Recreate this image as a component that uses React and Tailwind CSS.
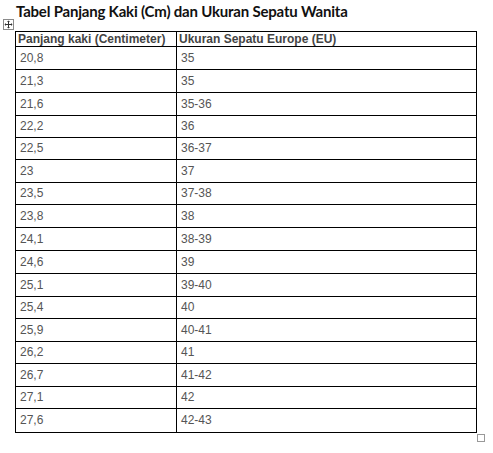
import React from "react";

const rows = [
  { kaki: "20,8", eu: "35", h: "h-[23px]" },
  { kaki: "21,3", eu: "35", h: "h-[23px]" },
  { kaki: "21,6", eu: "35-36", h: "h-[23px]" },
  { kaki: "22,2", eu: "36", h: "h-[22px]" },
  { kaki: "22,5", eu: "36-37", h: "h-[22px]" },
  { kaki: "23", eu: "37", h: "h-[23px]" },
  { kaki: "23,5", eu: "37-38", h: "h-[22px]" },
  { kaki: "23,8", eu: "38", h: "h-[23px]" },
  { kaki: "24,1", eu: "38-39", h: "h-[23px]" },
  { kaki: "24,6", eu: "39", h: "h-[23px]" },
  { kaki: "25,1", eu: "39-40", h: "h-[23px]" },
  { kaki: "25,4", eu: "40", h: "h-[22px]" },
  { kaki: "25,9", eu: "40-41", h: "h-[23px]" },
  { kaki: "26,2", eu: "41", h: "h-[22px]" },
  { kaki: "26,7", eu: "41-42", h: "h-[23px]" },
  { kaki: "27,1", eu: "42", h: "h-[22px]" },
  { kaki: "27,6", eu: "42-43", h: "h-[23px]" },
];

const MoveHandle = () => (
  <svg width="11" height="11" viewBox="0 0 11 11" className="block">
    <rect x="0.5" y="0.5" width="10" height="10" fill="white" stroke="#8a8a8a" />
    <g stroke="#333" strokeWidth="1" fill="none">
      <line x1="5.5" y1="2" x2="5.5" y2="9" />
      <line x1="2" y1="5.5" x2="9" y2="5.5" />
    </g>
    <g fill="#333">
      <polygon points="5.5,1.5 4,3 7,3" />
      <polygon points="5.5,9.5 4,8 7,8" />
      <polygon points="1.5,5.5 3,4 3,7" />
      <polygon points="9.5,5.5 8,4 8,7" />
    </g>
  </svg>
);

const App = () => {
  return (
    <div className="w-[493px] h-[453px] bg-white overflow-hidden relative">
      <h1 className="pl-[16px] pt-[2px] h-[19px] text-[15px] leading-[18px] font-bold text-[#111] font-['Lato',sans-serif] tracking-[-0.2px]">
        Tabel Panjang Kaki (Cm) dan Ukuran Sepatu Wanita
      </h1>

      <div className="pl-[3px] h-[12px]">
        <MoveHandle />
      </div>

      <div className="ml-[15px] w-[462px] border border-black font-['Liberation_Sans',Arial,sans-serif]">
        <div className="flex h-[15px] border-b border-black text-[12px] leading-[14px] font-bold text-[#444]">
          <div className="w-[161px] border-r border-black pl-[2px]">
            Panjang kaki (Centimeter)
          </div>
          <div className="flex-1 pl-[2px]">Ukuran Sepatu Europe (EU)</div>
        </div>
        {rows.map((r, i) => (
          <div
            key={r.kaki}
            className={`flex ${r.h} text-[12px] text-[#555] ${
              i < rows.length - 1 ? "border-b border-black" : ""
            }`}
          >
            <div className="w-[161px] border-r border-black pl-[4px] flex items-center pb-[1px]">
              {r.kaki}
            </div>
            <div className="flex-1 pl-[4px] flex items-center pb-[1px]">{r.eu}</div>
          </div>
        ))}
      </div>

      <div className="absolute left-[477px] top-[434px] w-[8px] h-[8px] border border-[#999] bg-white" />
    </div>
  );
};

export default App;
